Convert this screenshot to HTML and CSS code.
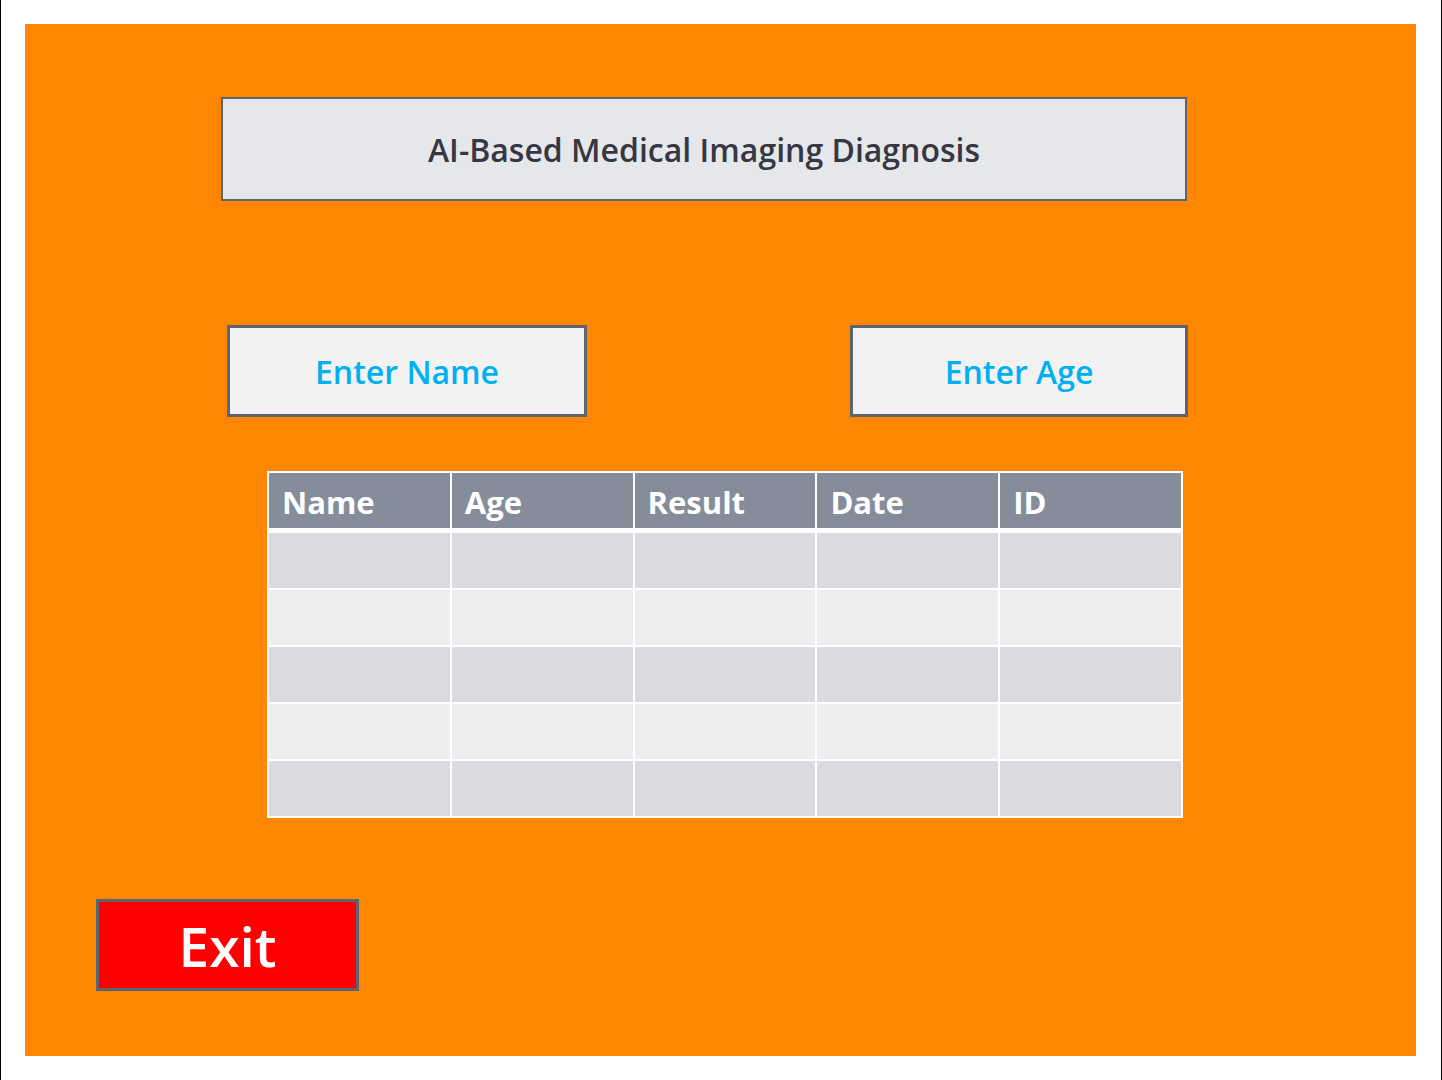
FILE: index.html
```html
<!DOCTYPE html>
<html lang="en">
<head>
  <meta charset="UTF-8" />
  <title>AI-Based Medical Imaging Diagnosis</title>
  <link rel="stylesheet" href="styles.css">
</head>
<body>
  <div class="page">
    <div class="panel">
      <div class="title">AI-Based Medical Imaging Diagnosis</div>

      <div class="inputs">
        <div class="field field-name">Enter Name</div>
        <div class="field field-age">Enter Age</div>
      </div>

      <div class="records">
        <div class="th">Name</div>
        <div class="th">Age</div>
        <div class="th">Result</div>
        <div class="th">Date</div>
        <div class="th">ID</div>

        <div class="td dark"></div><div class="td dark"></div><div class="td dark"></div><div class="td dark"></div><div class="td dark"></div>
        <div class="td light"></div><div class="td light"></div><div class="td light"></div><div class="td light"></div><div class="td light"></div>
        <div class="td dark"></div><div class="td dark"></div><div class="td dark"></div><div class="td dark"></div><div class="td dark"></div>
        <div class="td light"></div><div class="td light"></div><div class="td light"></div><div class="td light"></div><div class="td light"></div>
        <div class="td dark"></div><div class="td dark"></div><div class="td dark"></div><div class="td dark"></div><div class="td dark"></div>
      </div>

      <button class="exit">Exit</button>
    </div>
  </div>
</body>
</html>
```

FILE: styles.css
```css
* {
  margin: 0;
  padding: 0;
  box-sizing: border-box;
}
body {
  font-family: 'Open Sans', 'Liberation Sans', sans-serif;
  background: #ffffff;
}
.page {
  height: 1080px;
  border-left: 1px solid #000;
  border-right: 1px solid #000;
  padding: 24px 25px 24px 24px;
}
.panel {
  height: 1032px;
  background: #ff8600;
  display: flex;
  flex-direction: column;
  align-items: flex-start;
  padding-top: 73px;
}
.title {
  margin-left: 196px;
  width: 966px;
  height: 104px;
  background: #e6e7eb;
  border: 2px solid #5d6470;
  display: flex;
  align-items: center;
  justify-content: center;
  font-size: 32px;
  font-weight: 600;
  color: #363742;
}
.inputs {
  display: flex;
  margin-top: 124px;
  margin-left: 202px;
  gap: 263px;
}
.field {
  height: 92px;
  background: #f2f2f2;
  border: 3px solid #5d6470;
  display: flex;
  align-items: center;
  justify-content: center;
  font-size: 32px;
  font-weight: 600;
  color: #00b0f0;
}
.field-name {
  width: 360px;
}
.field-age {
  width: 338px;
}
.records {
  margin-top: 54px;
  margin-left: 242px;
  width: 916px;
  background: #ffffff;
  padding: 2px;
  display: grid;
  grid-template-columns: repeat(5, 1fr);
  grid-template-rows: 58px repeat(5, 55px);
  gap: 2px;
}
.th {
  align-self: start;
  height: 55px;
  background: #858d9b;
  color: #ffffff;
  font-weight: bold;
  font-size: 31px;
  padding-left: 13px;
  padding-top: 2px;
  display: flex;
  align-items: center;
}
.td.dark {
  background: #dadbdf;
}
.td.light {
  background: #ecedef;
}
.exit {
  margin-top: 81px;
  margin-left: 71px;
  width: 263px;
  height: 92px;
  background: #ff0000;
  border: 3px solid #5d6470;
  color: #ffffff;
  font-family: 'Open Sans', 'Liberation Sans', sans-serif;
  font-size: 55px;
  font-weight: 600;
  line-height: 1;
  cursor: pointer;
}
```
